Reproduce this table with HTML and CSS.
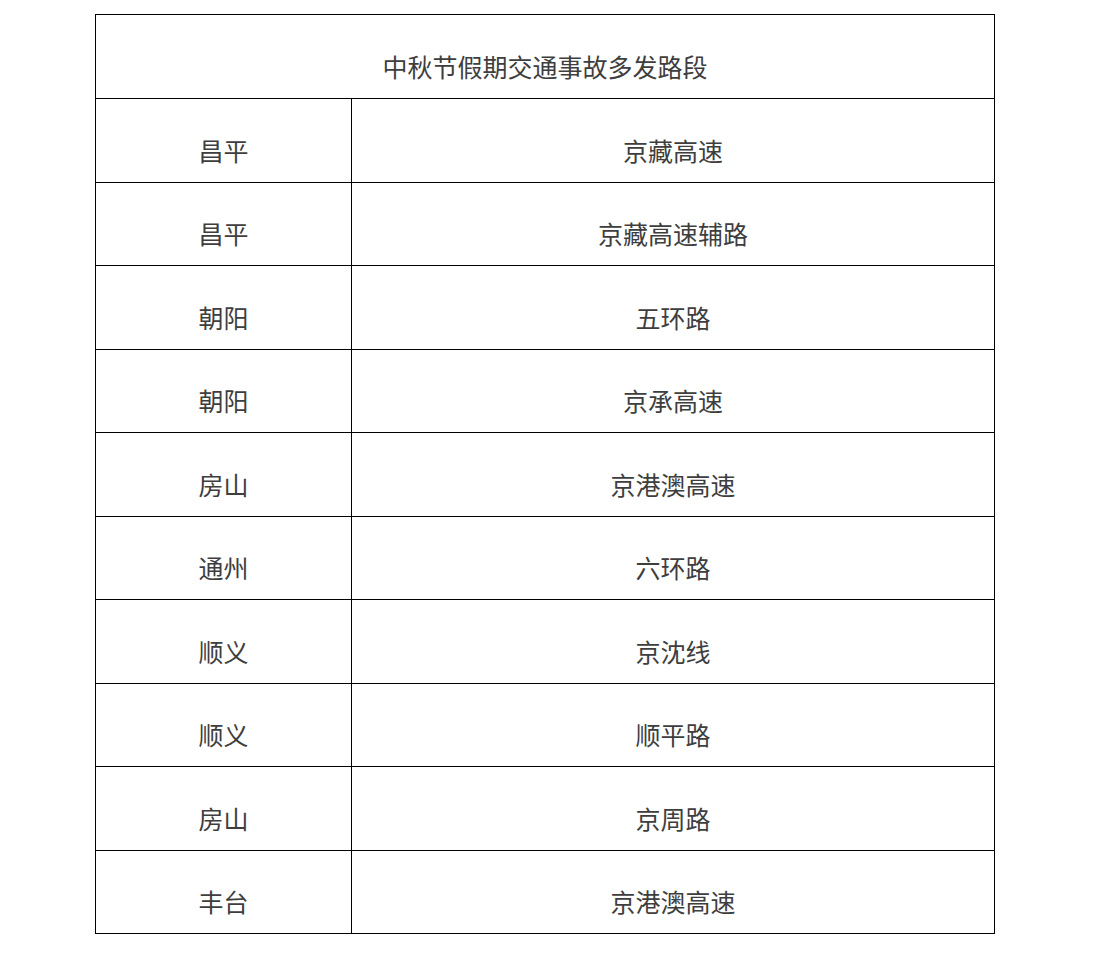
FILE: index.html
```html
<!DOCTYPE html>
<html lang="zh-CN">
<head>
<meta charset="utf-8">
<title>中秋节假期交通事故多发路段</title>
<link rel="stylesheet" href="styles.css">
</head>
<body>
<div class="page">
<table class="roads">
<colgroup>
<col class="col-district">
<col class="col-road">
</colgroup>
<thead>
<tr><th colspan="2">中秋节假期交通事故多发路段</th></tr>
</thead>
<tbody>
<tr><td>昌平</td><td>京藏高速</td></tr>
<tr><td>昌平</td><td>京藏高速辅路</td></tr>
<tr><td>朝阳</td><td>五环路</td></tr>
<tr><td>朝阳</td><td>京承高速</td></tr>
<tr><td>房山</td><td>京港澳高速</td></tr>
<tr><td>通州</td><td>六环路</td></tr>
<tr><td>顺义</td><td>京沈线</td></tr>
<tr><td>顺义</td><td>顺平路</td></tr>
<tr><td>房山</td><td>京周路</td></tr>
<tr><td>丰台</td><td>京港澳高速</td></tr>
</tbody>
</table>
</div>
</body>
</html>
```
FILE: styles.css
```css
html, body {
  margin: 0;
  padding: 0;
  background: #ffffff;
}
.page {
  padding: 14px 0 0 95px;
}
.roads {
  border-collapse: collapse;
  width: 900px;
  table-layout: fixed;
  font-family: "Noto Sans CJK SC", "Noto Sans", sans-serif;
  font-size: 25px;
  color: #3e3e3e;
}
.col-district {
  width: 256px;
}
.roads th,
.roads td {
  border: 1px solid #000;
  text-align: center;
  font-weight: normal;
  line-height: 36px;
  padding: 32.5px 10px 14px;
}
.roads th {
  padding-bottom: 14.5px;
}
```
